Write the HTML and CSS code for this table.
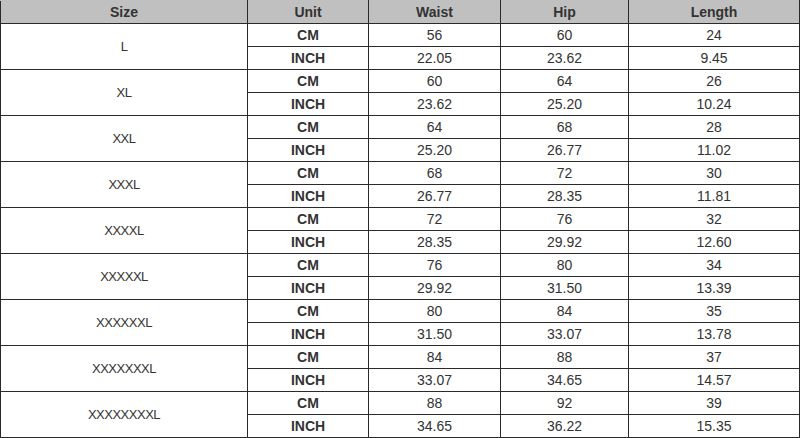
FILE: index.html
```html
<!DOCTYPE html>
<html>
<head>
<meta charset="utf-8">
<link rel="stylesheet" href="styles.css">
</head>
<body>
<table class="size-table">
  <colgroup>
    <col class="c-size"><col class="c-unit"><col class="c-waist"><col class="c-hip"><col class="c-len">
  </colgroup>
  <thead>
    <tr><th>Size</th><th>Unit</th><th>Waist</th><th>Hip</th><th>Length</th></tr>
  </thead>
  <tbody>
    <tr><td rowspan="2" class="size">L</td><td class="unit">CM</td><td>56</td><td>60</td><td>24</td></tr>
    <tr><td class="unit">INCH</td><td>22.05</td><td>23.62</td><td>9.45</td></tr>
    <tr><td rowspan="2" class="size">XL</td><td class="unit">CM</td><td>60</td><td>64</td><td>26</td></tr>
    <tr><td class="unit">INCH</td><td>23.62</td><td>25.20</td><td>10.24</td></tr>
    <tr><td rowspan="2" class="size">XXL</td><td class="unit">CM</td><td>64</td><td>68</td><td>28</td></tr>
    <tr><td class="unit">INCH</td><td>25.20</td><td>26.77</td><td>11.02</td></tr>
    <tr><td rowspan="2" class="size">XXXL</td><td class="unit">CM</td><td>68</td><td>72</td><td>30</td></tr>
    <tr><td class="unit">INCH</td><td>26.77</td><td>28.35</td><td>11.81</td></tr>
    <tr><td rowspan="2" class="size">XXXXL</td><td class="unit">CM</td><td>72</td><td>76</td><td>32</td></tr>
    <tr><td class="unit">INCH</td><td>28.35</td><td>29.92</td><td>12.60</td></tr>
    <tr><td rowspan="2" class="size">XXXXXL</td><td class="unit">CM</td><td>76</td><td>80</td><td>34</td></tr>
    <tr><td class="unit">INCH</td><td>29.92</td><td>31.50</td><td>13.39</td></tr>
    <tr><td rowspan="2" class="size">XXXXXXL</td><td class="unit">CM</td><td>80</td><td>84</td><td>35</td></tr>
    <tr><td class="unit">INCH</td><td>31.50</td><td>33.07</td><td>13.78</td></tr>
    <tr><td rowspan="2" class="size">XXXXXXXL</td><td class="unit">CM</td><td>84</td><td>88</td><td>37</td></tr>
    <tr><td class="unit">INCH</td><td>33.07</td><td>34.65</td><td>14.57</td></tr>
    <tr><td rowspan="2" class="size">XXXXXXXXL</td><td class="unit">CM</td><td>88</td><td>92</td><td>39</td></tr>
    <tr><td class="unit">INCH</td><td>34.65</td><td>36.22</td><td>15.35</td></tr>
  </tbody>
</table>
</body>
</html>
```
FILE: styles.css
```css
html, body {
  margin: 0;
  padding: 0;
  background: #ffffff;
}
.size-table {
  border-collapse: collapse;
  table-layout: fixed;
  width: 799px;
  font-family: "Liberation Sans", Arial, sans-serif;
  font-size: 14px;
  color: #333333;
}
.c-size { width: 247px; }
.c-unit { width: 121px; }
.c-waist { width: 132px; }
.c-hip { width: 128px; }
.c-len { width: 171px; }
.size-table th,
.size-table td {
  border: 1px solid #2a2a2a;
  height: 22px;
  padding: 0;
  text-align: center;
  vertical-align: middle;
  line-height: 16px;
}
.size-table th {
  background: #c0c0c0;
  font-weight: bold;
  color: #333333;
}
.size-table thead tr th {
  border-top-color: #c0c0c0;
}
.size-table td.unit {
  font-weight: bold;
}
.size-table td.size {
  font-weight: normal;
  font-size: 13px;
  letter-spacing: -0.5px;
}
```
